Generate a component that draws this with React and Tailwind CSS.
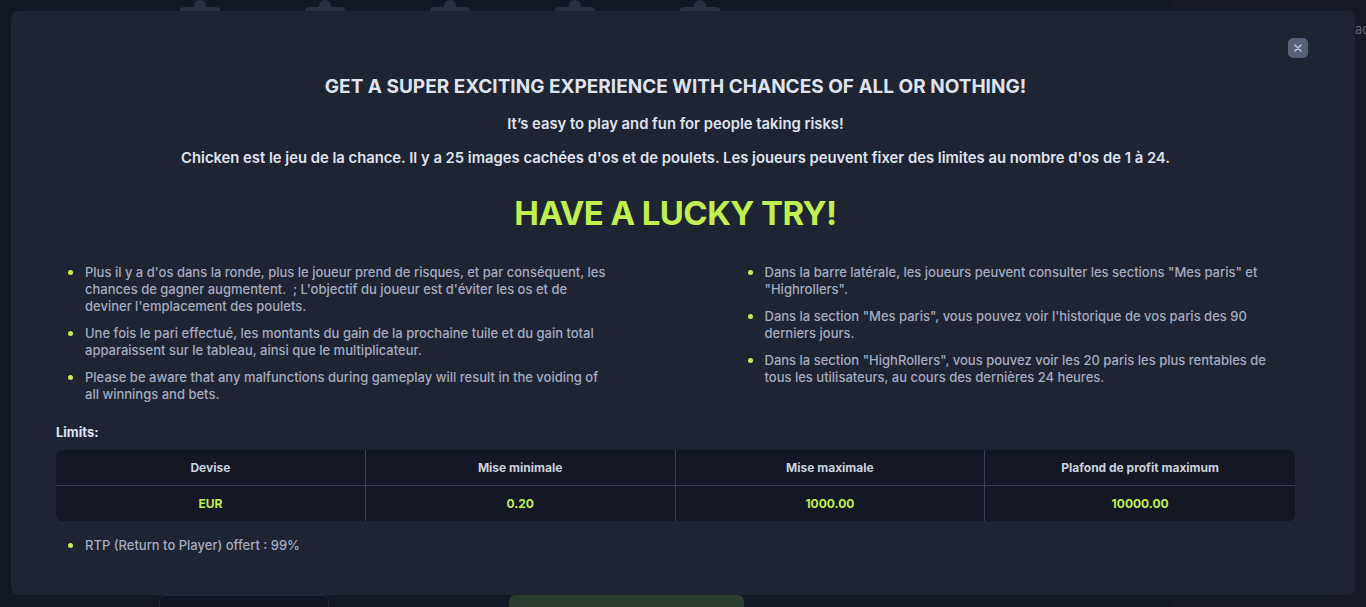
const LIME = "text-[#c2ef50]";

const leftRules = [
  "Plus il y a d'os dans la ronde, plus le joueur prend de risques, et par conséquent, les chances de gagner augmentent.\u00a0 ; L'objectif du joueur est d'éviter les os et de deviner l'emplacement des poulets.",
  "Une fois le pari effectué, les montants du gain de la prochaine tuile et du gain total apparaissent sur le tableau, ainsi que le multiplicateur.",
  "Please be aware that any malfunctions during gameplay will result in the voiding of all winnings and bets.",
];

const rightRules = [
  'Dans la barre latérale, les joueurs peuvent consulter les sections "Mes paris" et "Highrollers".',
  'Dans la section "Mes paris", vous pouvez voir l\'historique de vos paris des 90 derniers jours.',
  'Dans la section "HighRollers", vous pouvez voir les 20 paris les plus rentables de tous les utilisateurs, au cours des dernières 24 heures.',
];

const limits = [
  { label: "Devise", value: "EUR" },
  { label: "Mise minimale", value: "0.20" },
  { label: "Mise maximale", value: "1000.00" },
  { label: "Plafond de profit maximum", value: "10000.00" },
];

const Rule = ({ children }) => (
  <li className="flex gap-3 text-[13px] leading-[17px] font-medium text-[#a6abc1]">
    <span className="mt-[6px] h-[5px] w-[5px] shrink-0 rounded-full bg-[#c2ef50]" />
    <span>{children}</span>
  </li>
);

const Lamp = () => (
  <div className="flex w-[42px] flex-col items-center">
    <div className="h-[7px] w-[12px] rounded-t-full bg-[#2b2f3f]" />
    <div className="h-[4px] w-[40px] rounded-t-full bg-[#2b2f3f]" />
  </div>
);

export default function App() {
  return (
    <div
      className="relative h-[607px] w-[1366px] overflow-hidden bg-[#131825]"
      style={{ fontFamily: "Inter, 'Noto Sans', sans-serif" }}
    >
      {/* game layer behind the dialog */}
      <div className="flex h-full">
        <div className="flex flex-1 flex-col justify-between">
          <div className="flex gap-[83px] pl-[179px]">
            <Lamp />
            <Lamp />
            <Lamp />
            <Lamp />
            <Lamp />
          </div>
          <div className="flex items-end pl-[159px]">
            <div className="h-[12px] w-[170px] rounded-t-md border border-b-0 border-[#232838] bg-[#111622]" />
            <div className="ml-[180px] h-[12px] w-[235px] rounded-t-md bg-[#2c3d2f]" />
          </div>
        </div>
        <div className="w-[195px] overflow-hidden whitespace-nowrap border-l border-[#121622] bg-[#161a26] pt-[20px] pl-[183px] text-[13px] text-[#5c6277]">
          ac
        </div>
      </div>

      {/* dialog */}
      <div className="absolute left-[11px] top-[11px] h-[584px] w-[1344px] rounded-lg bg-[#1f2432] pl-[45px] pr-[60px] pt-[64px]">
        <button className="absolute right-[47px] top-[27px] flex h-5 w-5 items-center justify-center rounded-[5px] bg-[#585f78]">
          <svg width="8" height="8" viewBox="0 0 8 8" fill="none">
            <path d="M1 1l6 6M7 1L1 7" stroke="#b9bfd6" strokeWidth="1.6" strokeLinecap="round" />
          </svg>
        </button>

        <h2 className="text-center text-[19px] font-bold leading-6 text-[#dfe3ef]">
          GET A SUPER EXCITING EXPERIENCE WITH CHANCES OF ALL OR NOTHING!
        </h2>
        <p className="mt-[15px] text-center text-[14.8px] font-semibold leading-5 text-[#dfe3ef]">
          It’s easy to play and fun for people taking risks!
        </p>
        <p className="mt-[14px] text-center text-[14.8px] font-semibold leading-5 text-[#dfe3ef]">
          Chicken est le jeu de la chance. Il y a 25 images cachées d'os et de poulets. Les joueurs peuvent fixer des limites au nombre d'os de 1 à 24.
        </p>
        <h1 className={`mt-[25px] text-center text-[33px] font-bold leading-10 tracking-[-0.6px] ${LIME}`}>
          HAVE A LUCKY TRY!
        </h1>

        <div className="mt-[31px] grid grid-cols-2">
          <ul className="flex flex-col gap-[10px] pl-3 pr-[64px]">
            {leftRules.map((t) => (
              <Rule key={t}>{t}</Rule>
            ))}
          </ul>
          <ul className="flex flex-col gap-[10px] pl-[72px] pr-[20px]">
            {rightRules.map((t) => (
              <Rule key={t}>{t}</Rule>
            ))}
          </ul>
        </div>

        <div className="mt-[21px] text-[13px] font-bold leading-4 text-[#dfe3ef]">Limits:</div>

        <div className="mt-[10px] grid grid-cols-4 overflow-hidden rounded-md bg-[#131824] text-center text-[12px] font-bold">
          {limits.map((c, i) => (
            <div key={c.label} className={i < 3 ? "border-r border-[#3b4055]" : ""}>
              <div className="flex h-[36px] items-center justify-center border-b border-[#3b4055] text-[#cdd1de]">
                {c.label}
              </div>
              <div className={`flex h-[35px] items-center justify-center ${LIME}`}>{c.value}</div>
            </div>
          ))}
        </div>

        <ul className="mt-[16px] pl-3">
          <Rule>RTP (Return to Player) offert : 99%</Rule>
        </ul>
      </div>
    </div>
  );
}
